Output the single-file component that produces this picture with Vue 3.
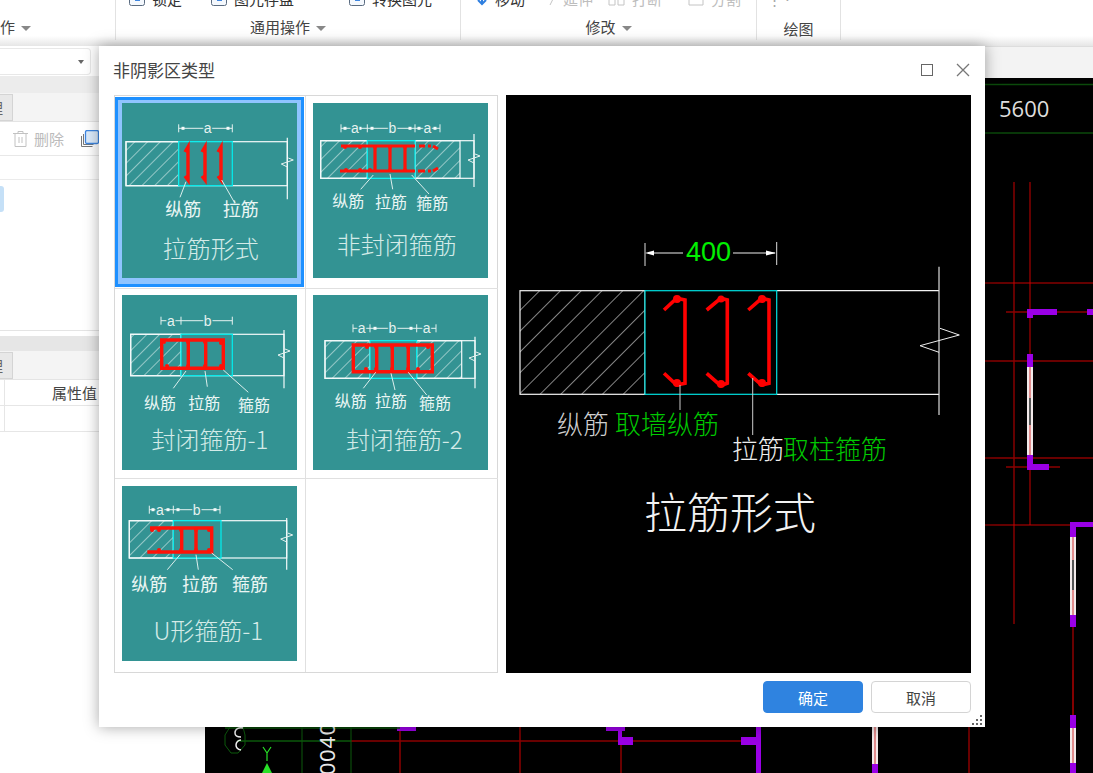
<script setup>
const thumbs = [
  {
    title: '拉筋形式', tx: 88.7, ty: 147,
    wall: [4, 38.7, 165.3, 82.7], hatch: [[4, 56.7]], cyan: [56.7, 110.3], brk: [34.7, 96.3], zig: 60,
    dim: { y: 25.3, ticks: [56.7, 110.3], dots: [61, 106], text: [['a', 85.7]] },
    red: 'M63 49l3-5v33l-3-4M80 49l3-5v33l-3-4M96 49l3-5v33l-3-4', sw: 3.4,
    nodes: [],
    leaders: [[64, 78.7, 58, 94.3], [99.7, 77, 112, 98.7]],
    labels: [['纵筋', 61.3, 107], ['拉筋', 118.7, 107]], ls: 18,
  },
  {
    title: '非封闭箍筋', tx: 83.7, ty: 143.7,
    wall: [7.7, 37.7, 161, 75.3], hatch: [[7.7, 54.3], [102, 147]], cyan: [54.3, 102], brk: [31, 84], zig: 56,
    dim: { y: 25.3, ticks: [28, 54.3, 102, 127], dots: [32, 47, 59, 97, 106, 122], text: [['a', 42], ['b', 79.3], ['a', 114.3]] },
    red: 'M28 43H102M106 43H112M115 43H118M120 43L125 46M27 68H102M105 68H112M115 68H118M120 68L125 65M62 43V68M77 43V68M92 43V68', sw: 3.2,
    nodes: [[32, 44], [47, 44], [62, 44], [77, 44], [92, 44], [33, 67], [47, 67], [57, 67], [77, 67], [92, 67]],
    leaders: [[60.3, 72, 47.7, 86.3], [77, 71, 79.7, 86.3], [98.7, 72, 116, 91]],
    labels: [['纵筋', 35.3, 98.7], ['拉筋', 78, 100], ['箍筋', 119.3, 101.3]], ls: 16,
  },
  {
    title: '封闭箍筋-1', tx: 88, ty: 146,
    wall: [8.7, 39.3, 162, 80.7], hatch: [[8.7, 59]], cyan: [59, 110.3], brk: [35, 93.3], zig: 59,
    dim: { y: 25.7, ticks: [39, 59, 110.3], dots: [], text: [['a', 49], ['b', 85.7]] },
    red: 'M39.7 45H101.3V73.3H39.7ZM66.3 45V73.3M83.7 45V73.3', sw: 3.4,
    nodes: [[42, 47], [66, 47], [83, 47], [99, 48], [45, 71], [66, 71], [83, 71], [99, 71]],
    leaders: [[64, 76, 51.3, 93.3], [83, 76, 85.3, 91.7], [101.3, 75, 126.3, 97.3]],
    labels: [['纵筋', 38, 109.3], ['拉筋', 82.3, 109.3], ['箍筋', 132, 110.7]], ls: 16,
  },
  {
    title: '封闭箍筋-2', tx: 91.3, ty: 146,
    wall: [12, 45.7, 162, 83.3], hatch: [[12, 57], [103.7, 148.7]], cyan: [57, 103.7], brk: [41.7, 93.3], zig: 62,
    dim: { y: 33.3, ticks: [40, 57, 103.7, 123], dots: [62, 98], text: [['a', 48.7], ['b', 79.3], ['a', 113.7]] },
    red: 'M40.3 50H119.3V76.7H40.3ZM63.7 50V76.7M79.3 50V76.7M95.3 50V76.7', sw: 3.4,
    nodes: [[54, 52], [63, 52], [79, 52], [95, 52], [115, 52], [53, 74], [63, 74], [79, 74], [95, 74], [105, 74]],
    leaders: [[62.7, 77.3, 50.3, 93.3], [78, 78.3, 82, 95], [95.3, 77.3, 113.7, 100]],
    labels: [['纵筋', 37.7, 107.3], ['拉筋', 78, 107.3], ['箍筋', 122, 109]], ls: 16,
  },
  {
    title: 'U形箍筋-1', tx: 86.3, ty: 146,
    wall: [7.3, 34.7, 164.7, 72], hatch: [[7.3, 51.3]], cyan: [51.3, 99], brk: [32, 83.7], zig: 52,
    dim: { y: 23.7, ticks: [27.3, 51.3, 98], dots: [31, 46, 56, 93], text: [['a', 38], ['b', 74.7]] },
    red: 'M28 42H89.7V66H25.3M59.7 42V66M74 42V66', sw: 3.4,
    nodes: [[30, 44], [37, 44], [59, 44], [74, 44], [87, 44], [37, 64], [59, 64], [74, 64], [87, 64]],
    leaders: [[58, 68.7, 45.3, 83.7], [74, 68.7, 76.3, 83.7], [89.7, 67, 110.7, 83.7]],
    labels: [['纵筋', 27.3, 99.3], ['拉筋', 78, 99.3], ['箍筋', 128, 99.3]], ls: 18,
  },
]

const zigPath = (t) => {
  const x = t.wall[2]
  const y = t.zig
  return `M${x + 1} ${y - 5}L${x + 6} ${y - 3}L${x - 6} ${y + 1}L${x} ${y + 4}`
}

const hooks = [
  'M158 215L170.7 203.3L179 205V288.3L170.7 290L158 278.3',
  'M200.7 215L214.7 203.3L221.3 205V288.3L214.7 290.7L200.7 278.3',
  'M242.3 215L255.7 203.3L263 205V288.3L255.7 290L242.3 278.3',
]

const topTools = [
  { text: '锁定', gap: 'g1' },
  { text: '图元存盘', gap: 'g2' },
  { text: '转换图元', gap: 'g3' },
]
const editTools = [
  { text: '延伸', cls: 'e1', w: 8, d: 'M1 17L7 5' },
  { text: '打断', cls: 'e2', w: 19, d: 'M2 5h6v12H2zM11 5h6v12h-6z' },
  { text: '分割', cls: 'e3', w: 18, d: 'M2 3h14v14H2zM5 10h8' },
]

const brightReds = [
  [1014, 182, 1014, 624], [1030, 182, 1030, 525], [985, 283, 1093, 283], [985, 525, 1070, 525],
]
const darkReds = [
  [1006, 312, 1093, 312], [985, 361, 1093, 361], [985, 458, 1093, 458], [1006, 467, 1060, 467],
  [1073, 627, 1073, 715], [351, 741, 758, 741], [400, 727, 400, 773], [520, 727, 520, 773],
  [621, 727, 621, 773], [969, 727, 969, 773], [1073, 670, 1073, 715],
]
const purples = [
  [1027, 309, 30, 6], [1027, 309, 6, 9], [1087, 309, 6, 6], [1027, 354, 6, 13], [1027, 455, 6, 15], [1027, 464, 22, 6],
  [1070, 522, 23, 5], [1070, 522, 6, 15], [1070, 615, 6, 12], [1070, 715, 6, 13], [1070, 763, 6, 10],
  [397, 727, 19, 4], [606, 727, 19, 4], [618, 727, 4, 12], [618, 737, 15, 8], [741, 737, 20, 8], [756, 727, 5, 46], [872, 764, 6, 9],
]
const whites = [
  [1027, 367, 6, 88], [1070, 537, 6, 78], [1070, 728, 6, 35], [872, 727, 6, 37],
]
</script>

<template>
  <div class="app">
    <header class="ribbon">
      <div class="group g-a"><span class="glabel">作<i class="caret"></i></span></div>
      <div class="group g-b">
        <div class="tools">
          <span v-for="t in topTools" :key="t.text" class="tool" :class="t.gap">
            <svg width="18" height="18" viewBox="0 0 18 18"><rect x="1.500" y="1.500" width="15" height="15" rx="2" fill="#f4f8fd" stroke="#5a6b80"/><rect x="7" y="4" width="5" height="8" fill="#3f86e0"/></svg>
            {{ t.text }}
          </span>
        </div>
        <span class="glabel">通用操作<i class="caret"></i></span>
      </div>
      <div class="group g-c">
        <div class="tools">
          <span class="tool move">
            <svg width="14" height="18" viewBox="0 0 14 18"><path d="M7 4v10M3 11l4 4 4-4" fill="none" stroke="#2f7fe0" stroke-width="2"/></svg>
            移动
          </span>
          <span v-for="t in editTools" :key="t.text" class="tool muted" :class="t.cls">
            <svg :width="t.w" height="20" :viewBox="'0 0 ' + t.w + ' 20'"><path :d="t.d" fill="none" stroke="#c4c4c4"/></svg>
            {{ t.text }}
          </span>
        </div>
        <span class="glabel">修改<i class="caret"></i></span>
      </div>
      <div class="group g-d">
        <div class="tools"><span class="draw-dots">⋮ ⋅</span></div>
        <span class="glabel low">绘图</span>
      </div>
    </header>

    <div class="main">
      <aside class="side">
        <div class="combo-row"><div class="combo"><i class="caret small"></i></div></div>
        <div class="tabs tabs-1"><span class="tab">理</span></div>
        <div class="toolbar">
          <svg class="trash" width="17" height="18" viewBox="0 0 17 18"><path d="M1 3.500h15M6 3.500V1.500h5v2M3 3.500v13h11v-13M7 7v6M10 7v6" fill="none" stroke="#c2c2c2"/></svg>
          <span class="del">删除</span>
          <svg class="copy" width="19" height="18" viewBox="0 0 19 18"><path d="M1.500 6v10.500h11" fill="none" stroke="#777"/><path d="M3.500 4v10.500h10" fill="none" stroke="#777"/><rect x="5.500" y="0.500" width="13" height="13" rx="1.500" fill="#dcebfb" stroke="#3f86e0" stroke-width="1.300"/></svg>
        </div>
        <div class="search-row"></div>
        <div class="list"><div class="selected"></div></div>
        <div class="spacer"></div>
        <div class="bar"></div>
        <div class="tabs tabs-2"><span class="tab">理</span></div>
        <div class="prop-row head"><span class="cell-a"></span><span class="cell-b">属性值</span></div>
        <div class="prop-row"><span class="cell-a"></span><span class="cell-b"></span></div>
      </aside>

      <main class="work">
        <div class="doc-strip"></div>
        <svg class="cad" viewBox="205 78 888 695" width="888" height="695">
          <line x1="985" y1="84.500" x2="1093" y2="84.500" stroke="#0b4a0b" stroke-width="1.500"/>
          <line x1="985" y1="133" x2="1093" y2="133" stroke="#0b4a0b" stroke-width="1.500"/>
          <text x="999" y="117" class="cad-num">5600</text>
          <line v-for="(l, i) in brightReds" :key="'b' + i" :x1="l[0]" :y1="l[1]" :x2="l[2]" :y2="l[3]" stroke="#c80000" stroke-width="1"/>
          <line v-for="(l, i) in darkReds" :key="'d' + i" :x1="l[0]" :y1="l[1]" :x2="l[2]" :y2="l[3]" stroke="#8c0000" stroke-width="1.500"/>
          <rect v-for="(r, i) in whites" :key="'w' + i" :x="r[0]" :y="r[1]" :width="r[2]" :height="r[3]" fill="#f2eaea"/>
          <line v-for="(r, i) in whites" :key="'wl' + i" :x1="r[0] + 3" :y1="r[1]" :x2="r[0] + 3" :y2="r[1] + r[3]" stroke="#d03030" stroke-width="1"/>
          <rect v-for="(r, i) in purples" :key="'p' + i" :x="r[0]" :y="r[1]" :width="r[2]" :height="r[3]" fill="#9a00e6"/>
          <line x1="1030" y1="398" x2="1030" y2="425" stroke="#555" stroke-width="2"/>
          <line x1="1073" y1="560" x2="1073" y2="590" stroke="#555" stroke-width="2"/>
          <line x1="237" y1="741" x2="351" y2="741" stroke="#0d5a0d" stroke-width="1.500"/>
          <line x1="225" y1="728" x2="400" y2="728" stroke="#0d5a0d" stroke-width="1.500"/>
          <line x1="302" y1="727" x2="302" y2="773" stroke="#0d5a0d"/>
          <line x1="351" y1="727" x2="351" y2="773" stroke="#0d5a0d"/>
          <path d="M230 727l-5 8v10l6 8h7l7-8v-10l-2-8" fill="none" stroke="#0d5a0d"/>
          <path d="M243 728a6 5 0 0 0-8 5q0 4 6 4M241 740a5 5 0 0 0-5 5q0 4 5 5" fill="none" stroke="#eee" stroke-width="1.500"/>
          <path d="M263 747l4 6 4-6M267 753v8" fill="none" stroke="#28e028" stroke-width="1.200"/>
          <path d="M267 763l-5 10h10z" fill="#28e028"/>
          <text class="cad-rot" transform="translate(335 775) rotate(-90)">0040</text>
        </svg>
      </main>
    </div>

    <section class="dialog">
      <div class="dlg-head">
        <span class="dlg-title">非阴影区类型</span>
        <svg class="max" width="12" height="12" viewBox="0 0 12 12"><rect x="0.500" y="0.500" width="11" height="11" fill="none" stroke="#666"/></svg>
        <svg class="close" width="14" height="14" viewBox="0 0 14 14"><path d="M1 1l12 12M13 1L1 13" fill="none" stroke="#777" stroke-width="1.300"/></svg>
      </div>
      <div class="dlg-body">
        <div class="picker">
          <div v-for="(t, i) in thumbs" :key="t.title" class="pick" :class="{ active: i === 0 }">
            <svg class="thumb" viewBox="0 0 175 175" width="175" height="175">
              <defs>
                <pattern :id="'hatch' + i" width="9" height="9" patternUnits="userSpaceOnUse" patternTransform="rotate(45)">
                  <line x1="0" y1="0" x2="0" y2="9" stroke="#e8f4f2" stroke-width="1.100"/>
                </pattern>
              </defs>
              <rect width="175" height="175" fill="#339393"/>
              <rect v-for="h in t.hatch" :key="h[0]" :x="h[0]" :y="t.wall[1]" :width="h[1] - h[0]" :height="t.wall[3] - t.wall[1]" :fill="'url(#hatch' + i + ')'" stroke="#f4fafa" stroke-width="1.200"/>
              <rect :x="t.wall[0]" :y="t.wall[1]" :width="t.wall[2] - t.wall[0]" :height="t.wall[3] - t.wall[1]" fill="none" stroke="#f4fafa" stroke-width="1.200"/>
              <rect :x="t.cyan[0]" :y="t.wall[1]" :width="t.cyan[1] - t.cyan[0]" :height="t.wall[3] - t.wall[1]" fill="#339393" stroke="#00f0f0" stroke-width="1.200"/>
              <line :x1="t.wall[2]" :y1="t.brk[0]" :x2="t.wall[2]" :y2="t.brk[1]" stroke="#f4fafa" stroke-width="1.200"/>
              <path :d="zigPath(t)" fill="none" stroke="#e6f2f0"/>
              <line :x1="t.dim.ticks[0]" :y1="t.dim.y" :x2="t.dim.ticks[t.dim.ticks.length - 1]" :y2="t.dim.y" stroke="#e6f2f0"/>
              <line v-for="x in t.dim.ticks" :key="x" :x1="x" :y1="t.dim.y - 4" :x2="x" :y2="t.dim.y + 4" stroke="#e6f2f0"/>
              <rect v-for="x in t.dim.dots" :key="'dot' + x" :x="x - 1.500" :y="t.dim.y - 1.500" width="3" height="3" fill="#f4fafa"/>
              <text v-for="d in t.dim.text" :key="'dt' + d[1]" :x="d[1]" :y="t.dim.y" class="dimtxt">{{ d[0] }}</text>
              <path :d="t.red" fill="none" stroke="#ff1208" :stroke-width="t.sw"/>
              <circle v-for="n in t.nodes" :key="n[0] + '-' + n[1]" :cx="n[0]" :cy="n[1]" r="2" fill="#ff1208"/>
              <line v-for="l in t.leaders" :key="l[0]" :x1="l[0]" :y1="l[1]" :x2="l[2]" :y2="l[3]" stroke="#dcefed"/>
              <text v-for="l in t.labels" :key="l[0]" :x="l[1]" :y="l[2] - 2" class="lbl" :font-size="t.ls">{{ l[0] }}</text>
              <text :x="t.tx" :y="t.ty - 3" class="ttl">{{ t.title }}</text>
            </svg>
          </div>
          <div class="pick"></div>
        </div>
        <svg class="preview" viewBox="0 0 465 578" width="465" height="578">
          <defs>
            <pattern id="hatchBig" width="14.700" height="14.700" patternUnits="userSpaceOnUse" patternTransform="rotate(45)">
              <line x1="0" y1="0" x2="0" y2="14.700" stroke="#f0f0f0" stroke-width="1.100"/>
            </pattern>
          </defs>
          <rect width="465" height="578" fill="#000"/>
          <line x1="139" y1="148" x2="139" y2="171" stroke="#ddd"/>
          <line x1="270.700" y1="147" x2="270.700" y2="170" stroke="#ddd"/>
          <line x1="142" y1="158" x2="177" y2="158" stroke="#eee"/>
          <line x1="227" y1="158" x2="269" y2="158" stroke="#eee"/>
          <path d="M139 158l9-2.500v5zM270 158l-10-2.500v5z" fill="#fff"/>
          <text x="202.500" y="157" class="big-dim">400</text>
          <rect x="14" y="195.700" width="125" height="103.600" fill="url(#hatchBig)" stroke="#f4f4f4" stroke-width="1.200"/>
          <line x1="270.700" y1="195.700" x2="433" y2="195.700" stroke="#f4f4f4" stroke-width="1.200"/>
          <line x1="270.700" y1="299.300" x2="433" y2="299.300" stroke="#f4f4f4" stroke-width="1.200"/>
          <rect x="139" y="195.700" width="131.700" height="103.600" fill="#000" stroke="#00e0e0" stroke-width="1.200"/>
          <line x1="433" y1="171.700" x2="433" y2="320" stroke="#ddd" stroke-width="1.200"/>
          <path d="M434 233.300L453.300 240L414 250.700L433 257.300" fill="none" stroke="#eee"/>
          <path v-for="h in hooks" :key="h" :d="h" fill="none" stroke="#ff0000" stroke-width="3.600"/>
          <circle cx="171" cy="204" r="4" fill="#f00"/><circle cx="171" cy="288" r="4" fill="#f00"/>
          <circle cx="215" cy="204" r="3.500" fill="#f00"/><circle cx="215" cy="289" r="4" fill="#f00"/>
          <circle cx="256" cy="204" r="4" fill="#f00"/><circle cx="256" cy="288" r="4" fill="#f00"/>
          <line x1="174" y1="290" x2="174" y2="315" stroke="#ccc"/>
          <line x1="246.700" y1="283" x2="246.700" y2="340" stroke="#ccc"/>
          <text x="51" y="327" class="p-lbl grey">纵筋</text>
          <text x="109" y="327" class="p-lbl green">取墙纵筋</text>
          <text x="226" y="352" class="p-lbl white">拉筋</text>
          <text x="277" y="352" class="p-lbl green">取柱箍筋</text>
          <text x="224" y="415" class="p-title">拉筋形式</text>
        </svg>
      </div>
      <div class="dlg-foot">
        <button class="btn primary">确定</button>
        <button class="btn">取消</button>
      </div>
      <svg class="grip" width="10" height="10" viewBox="0 0 10 10"><path d="M8 0h2v2H8zM4 4h2v2H4zM8 4h2v2H8zM0 8h2v2H0zM4 8h2v2H4zM8 8h2v2H8z" fill="#666"/></svg>
    </section>
  </div>
</template>

<style scoped>
.app {
  position: relative;
  width: 1093px;
  height: 773px;
  overflow: hidden;
  background: #fff;
  font-family: "Noto Sans CJK SC", "Noto Sans", sans-serif;
  font-size: 15px;
  color: #333;
}

.ribbon {
  display: flex;
  height: 46px;
  background: linear-gradient(#fff 0, #fff 36px, #e6e6e6 46px);
}
.group {
  position: relative;
  display: flex;
  flex-direction: column;
  height: 40px;
  border-right: 1px solid #e2e2e2;
}
.g-a { width: 115px; }
.g-b { width: 344px; }
.g-c { width: 295px; }
.g-d { width: 83px; }
.tools {
  display: flex;
  align-items: center;
  height: 16px;
  margin-top: -10px;
  white-space: nowrap;
}
.tool { display: inline-flex; align-items: center; gap: 6px; }
.tool.g1 { margin-left: 12px; }
.tool.g2 { margin-left: 28px; }
.tool.g3 { margin-left: 54px; }
.tool.move { margin-left: 14px; }
.tool.muted { color: #bdbdbd; }
.tool.e1 { margin-left: 24px; }
.tool.e2 { margin-left: 14px; }
.tool.e3 { margin-left: 25px; }
.draw-dots { margin-left: 10px; color: #aaa; }
.glabel {
  position: absolute;
  left: 0;
  right: 0;
  top: 17px;
  text-align: center;
  line-height: 20px;
  color: #444;
}
.g-a .glabel { text-align: left; left: 0; }
.glabel.low { top: 19px; }
.caret {
  display: inline-block;
  width: 0;
  height: 0;
  margin-left: 6px;
  border: 5px solid transparent;
  border-top: 5px solid #888;
  border-bottom: 0;
  vertical-align: 2px;
}
.caret.small { margin: 0; border-width: 4px 3.500px 0; border-top-color: #666; }

.main { display: flex; height: 727px; }
.side { width: 205px; flex: none; background: #fff; }
.combo-row { height: 30px; padding-top: 2px; box-sizing: border-box; }
.combo {
  display: flex;
  align-items: center;
  justify-content: flex-end;
  width: 91px;
  height: 27px;
  padding-right: 6px;
  box-sizing: border-box;
  border: 1px solid #e8e8e8;
  border-left: 0;
  border-radius: 0 4px 4px 0;
}
.tabs {
  display: flex;
  align-items: flex-end;
  box-sizing: border-box;
  background: #f4f4f4;
  border-bottom: 1px solid #e4e4e4;
}
.tabs-1 { height: 46px; background: linear-gradient(#ececec 0, #ececec 17px, #f4f4f4 17px); }
.tabs-2 { height: 29px; }
.tab {
  width: 13px;
  height: 27px;
  padding-right: 9px;
  overflow: hidden;
  box-sizing: border-box;
  border: 1px solid #d4d4d4;
  border-left: 0;
  background: #e8e8e8;
  direction: rtl;
  line-height: 26px;
  color: #666;
}
.toolbar {
  display: flex;
  align-items: center;
  height: 34px;
  padding-left: 12px;
  box-sizing: border-box;
  border-bottom: 1px solid #e8e8e8;
}
.del { margin-left: 5px; color: #bbb; }
.copy { margin-left: 16px; flex: none; }
.search-row { height: 24px; box-sizing: border-box; border-bottom: 1px solid #ebebeb; }
.list { height: 151px; padding-top: 6px; box-sizing: border-box; border-bottom: 1px solid #e4e4e4; }
.selected { width: 4px; height: 26px; background: #c5e0f7; border-radius: 0 3px 3px 0; }
.spacer { height: 5px; }
.bar { height: 15px; background: #e6e6e6; }
.prop-row {
  display: flex;
  height: 26px;
  box-sizing: border-box;
  border-bottom: 1px solid #e6e6e6;
}
.cell-a { width: 4px; border-right: 1px solid #e6e6e6; }
.cell-b { padding-left: 47px; line-height: 25px; color: #444; white-space: nowrap; }

.work { flex: 1; min-width: 0; }
.doc-strip { height: 32px; box-sizing: border-box; background: #f3f3f3; border-top: 1px solid #ddd; }
.cad { display: block; background: #000; }
.cad-num { font-family: "Open Sans", "Noto Sans", sans-serif; font-size: 22px; fill: #ddd; }
.cad-rot { font-family: "Liberation Sans", sans-serif; font-size: 22px; letter-spacing: 1px; fill: #e8e8e8; }

.dialog {
  position: absolute;
  left: 99px;
  top: 46px;
  width: 886px;
  height: 681px;
  box-sizing: border-box;
  padding: 0 14px 0 15px;
  background: #fff;
  box-shadow: 0 0 14px rgba(0, 0, 0, 0.35);
}
.dlg-head { display: flex; align-items: center; height: 49px; padding-bottom: 2px; box-sizing: border-box; }
.dlg-title { flex: 1; color: #444; line-height: 20px; margin-left: -1px; font-size: 17px; }
.max { margin-right: 23px; }
.close { margin-right: 1px; }
.dlg-body { display: flex; gap: 8px; height: 578px; }
.picker {
  display: grid;
  grid-template-columns: 191px 192px;
  grid-template-rows: 193px 190px 193px;
  width: 384px;
  height: 578px;
  box-sizing: border-box;
  border: 1px solid #d8d8d8;
  flex: none;
}
.pick {
  position: relative;
  box-sizing: border-box;
  padding: 7px 7px;
  border-right: 1px solid #e0e0e0;
  border-bottom: 1px solid #e0e0e0;
}
.pick:nth-child(3), .pick:nth-child(4) { padding-top: 6px; }
.pick:nth-child(n + 5) { border-bottom: 0; }
.pick:nth-child(2n) { border-right: 0; }
.pick.active::after {
  content: "";
  position: absolute;
  inset: 1px 1px 1px 0;
  border: 3px solid #1e90ff;
  background: #8fc4ff;
  pointer-events: none;
}
.thumb { display: block; position: relative; z-index: 1; }
.dimtxt {
  font-family: "Liberation Sans", sans-serif;
  font-size: 14px;
  fill: #e6f2f0;
  stroke: #339393;
  stroke-width: 3px;
  paint-order: stroke;
  text-anchor: middle;
  dominant-baseline: central;
}
.lbl { fill: #eaf6f4; text-anchor: middle; dominant-baseline: central; }
.ttl { font-size: 24px; fill: #d4ebe8; text-anchor: middle; dominant-baseline: central; font-weight: 300; }
.preview { display: block; flex: none; }
.big-dim {
  font-family: "Liberation Sans", sans-serif;
  font-size: 27px;
  fill: #00f000;
  text-anchor: middle;
  dominant-baseline: central;
}
.p-lbl { font-size: 26px; dominant-baseline: central; font-weight: 300; }
.grey { fill: #cfcfcf; }
.white { fill: #eee; }
.green { fill: #00c800; }
.p-title { font-size: 43px; fill: #f2f2f2; text-anchor: middle; dominant-baseline: central; font-weight: 300; }

.dlg-foot { display: flex; justify-content: flex-end; gap: 8px; margin-top: 8px; }
.btn {
  width: 100px;
  height: 32px;
  padding: 0;
  font: inherit;
  font-size: 15px;
  color: #444;
  background: #fff;
  border: 1px solid #d4d4d4;
  border-radius: 4px;
}
.btn.primary { background: #2f83e0; border-color: #2f83e0; color: #fff; }
.grip { position: absolute; right: 3px; bottom: 2px; }
</style>

<style>
html, body { margin: 0; overflow: hidden; }
</style>
